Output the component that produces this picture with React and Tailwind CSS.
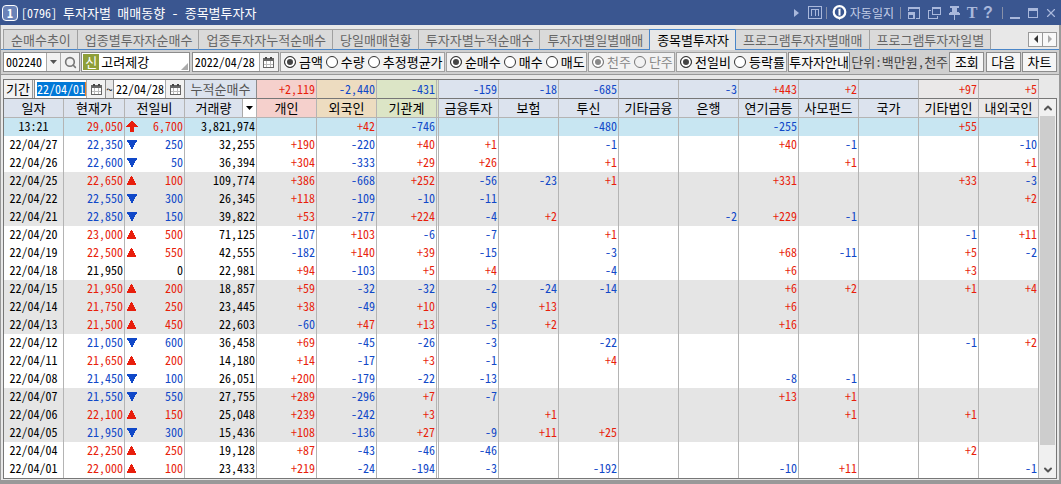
import React, { useState } from 'react';
import { ChevronDown, ChevronUp, Search, X } from 'lucide-react';

const TABS = [
    '순매수추이',
    '업종별투자자순매수',
    '업종투자자누적순매수',
    '당일매매현황',
    '투자자별누적순매수',
    '투자자별일별매매',
    '종목별투자자',
    '프로그램투자자별매매',
    '프로그램투자자일별',
];

const INVESTORS = [
    { name: '개인', total: '+2,119', bg: 'bg-[#f5d0cc]' },
    { name: '외국인', total: '-2,440', bg: 'bg-[#eddcc0]' },
    { name: '기관계', total: '-431', bg: 'bg-[#dce5c6]' },
    { name: '금융투자', total: '-159', bg: 'bg-[#dce3ee]' },
    { name: '보험', total: '-18', bg: 'bg-[#dce3ee]' },
    { name: '투신', total: '-685', bg: 'bg-[#dce3ee]' },
    { name: '기타금융', total: '', bg: 'bg-[#dce3ee]' },
    { name: '은행', total: '-3', bg: 'bg-[#dce3ee]' },
    { name: '연기금등', total: '+443', bg: 'bg-[#dce3ee]' },
    { name: '사모펀드', total: '+2', bg: 'bg-[#dce3ee]' },
    { name: '국가', total: '', bg: 'bg-[#dce3ee]' },
    { name: '기타법인', total: '+97', bg: 'bg-[#eae8e8]' },
    { name: '내외국인', total: '+5', bg: 'bg-[#eae8e8]' },
];

// [date, price, direction, change, volume, net buying per investor]
const ROWS = [
    ['13:21', '29,050', 'limit', '6,700', '3,821,974', ['', '+42', '-746', '', '', '-480', '', '', '-255', '', '', '+55', '']],
    ['22/04/27', '22,350', 'down', '250', '32,255', ['+190', '-220', '+40', '+1', '', '-1', '', '', '+40', '-1', '', '', '-10']],
    ['22/04/26', '22,600', 'down', '50', '36,394', ['+304', '-333', '+29', '+26', '', '+1', '', '', '', '+1', '', '', '+1']],
    ['22/04/25', '22,650', 'up', '100', '109,774', ['+386', '-668', '+252', '-56', '-23', '+1', '', '', '+331', '', '', '+33', '-3']],
    ['22/04/22', '22,550', 'down', '300', '26,345', ['+118', '-109', '-10', '-11', '', '', '', '', '', '', '', '', '+2']],
    ['22/04/21', '22,850', 'down', '150', '39,822', ['+53', '-277', '+224', '-4', '+2', '', '', '-2', '+229', '-1', '', '', '']],
    ['22/04/20', '23,000', 'up', '500', '71,125', ['-107', '+103', '-6', '-7', '', '+1', '', '', '', '', '', '-1', '+11']],
    ['22/04/19', '22,500', 'up', '550', '42,555', ['-182', '+140', '+39', '-15', '', '-3', '', '', '+68', '-11', '', '+5', '-2']],
    ['22/04/18', '21,950', '', '0', '22,981', ['+94', '-103', '+5', '+4', '', '-4', '', '', '+6', '', '', '+3', '']],
    ['22/04/15', '21,950', 'up', '200', '18,857', ['+59', '-32', '-32', '-2', '-24', '-14', '', '', '+6', '+2', '', '+1', '+4']],
    ['22/04/14', '21,750', 'up', '250', '23,445', ['+38', '-49', '+10', '-9', '+13', '', '', '', '+6', '', '', '', '']],
    ['22/04/13', '21,500', 'up', '450', '22,603', ['-60', '+47', '+13', '-5', '+2', '', '', '', '+16', '', '', '', '']],
    ['22/04/12', '21,050', 'down', '600', '36,458', ['+69', '-45', '-26', '-3', '', '-22', '', '', '', '', '', '-1', '+2']],
    ['22/04/11', '21,650', 'up', '200', '14,180', ['+14', '-17', '+3', '-1', '', '+4', '', '', '', '', '', '', '']],
    ['22/04/08', '21,450', 'down', '100', '26,051', ['+200', '-179', '-22', '-13', '', '', '', '', '-8', '-1', '', '', '']],
    ['22/04/07', '21,550', 'down', '550', '27,755', ['+289', '-296', '+7', '-7', '', '', '', '', '+13', '+1', '', '', '']],
    ['22/04/06', '22,100', 'up', '150', '25,048', ['+239', '-242', '+3', '', '+1', '', '', '', '', '+1', '', '+1', '']],
    ['22/04/05', '21,950', 'down', '300', '15,436', ['+108', '-136', '+27', '-9', '+11', '+25', '', '', '', '', '', '', '']],
    ['22/04/04', '22,250', 'up', '250', '19,128', ['+87', '-43', '-46', '-46', '', '', '', '', '', '', '', '+2', '']],
    ['22/04/01', '22,000', 'up', '100', '23,433', ['+219', '-24', '-194', '-3', '', '-192', '', '', '-10', '+11', '', '', '-1']],
];

const RED = 'text-[#e81e0c]';
const BLUE = 'text-[#1048c8]';

const signColor = (value) => (value.startsWith('-') ? BLUE : RED);

const directionColor = (direction) => {
    if (direction === 'down') return BLUE;
    if (direction === '') return 'text-black';
    return RED;
};

const rowBg = (index) => {
    if (index === 0) return 'bg-[#c8e6f2]';
    return Math.floor(index / 3) % 2 ? 'bg-[#e5e5e5]' : 'bg-white';
};

// 기관계 is separated from the institution breakdown by a double rule
const ruleRight = (index) => (index === 2 ? 'border-r-3 border-double' : 'border-r');

const DirectionMark = ({ direction }) => {
    if (direction === '') return <span />;
    return (
        <svg className="size-3" viewBox="0 0 12 12" fill="currentColor" shapeRendering="crispEdges">
            {direction === 'limit' && <path d="M5 1H7V2H8V3H9V4H10V5H11V6H12V7H8V12H4V7H0V6H1V5H2V4H3V3H4V2H5Z" />}
            {direction === 'up' && <path d="M5 2H6V3H7V5H8V7H9V9H10V11H1V9H2V7H3V5H4V3H5Z" />}
            {direction === 'down' && <path d="M1 2H11V4H10V5H9V7H8V9H7V11H5V9H4V7H3V5H2V4H1Z" />}
        </svg>
    );
};

const CalendarButton = ({ label }) => (
    <button type="button" aria-label={label} className="w-[19px] shrink-0 self-stretch flex items-center justify-center bg-[#f2f2f2] border-l border-[#aaa]">
        <svg width="11" height="11" viewBox="0 0 11 11" fill="none" shapeRendering="crispEdges">
            <path d="M0.5 1.5H10.5V10.5H0.5Z" fill="#fff" stroke="#666" />
            <path d="M0 1H11V4H0Z" fill="#666" />
            <path d="M2 0H4V2H2ZM7 0H9V2H7Z" fill="#444" />
            <path d="M3.5 4V10M7.5 4V10M1 7.5H10" stroke="#bbb" />
        </svg>
    </button>
);

const RadioGroup = ({ name, label, options, disabled }) => {
    const [value, setValue] = useState(options[0]);

    return (
        <fieldset
            disabled={disabled}
            aria-label={label}
            className="flex items-center gap-[3px] h-5 pl-[3px] pr-px bg-[#f2f2f2] border border-[#a0a0a0] shrink-0"
        >
            {options.map((option) => (
                <label key={option} className={`flex items-center gap-[3px] whitespace-nowrap ${disabled ? 'text-[#888]' : ''}`}>
                    <input
                        type="radio"
                        name={name}
                        checked={value === option}
                        onChange={() => setValue(option)}
                        className="appearance-none size-3 rounded-full border border-[#333] bg-white checked:bg-[#444] checked:shadow-[inset_0_0_0_2px_white] disabled:border-[#777] disabled:bg-[#f2f2f2] disabled:checked:bg-[#888]"
                    />
                    {option}
                </label>
            ))}
        </fieldset>
    );
};

const ToolButton = ({ children, className = '' }) => (
    <button type="button" className={`h-5 bg-[#f5f5f5] border border-[#8c8c8c] whitespace-nowrap shrink-0 ${className}`}>
        {children}
    </button>
);

const TitleButton = ({ label, className = 'w-5', children }) => (
    <button type="button" aria-label={label} className={`h-5 flex items-center justify-center ${className}`}>
        {children}
    </button>
);

const Divider = () => <span className="w-px h-3 bg-[#8790a8]" />;

const TitleBar = () => (
    <header className="flex items-center h-[25px] pl-[2px] pr-px bg-[#3a5690] text-white">
        <span className="size-4 flex items-center justify-center rounded-sm border border-white bg-[#6a83b8] text-[12px] font-bold">1</span>
        <h1 className="ml-[3px] whitespace-pre">
            <span className="text-[12px]">[0796] </span>
            투자자별 매매동향 - 종목별투자자
        </h1>
        <div className="ml-auto flex items-center text-[#a9b8dc]">
            <button type="button" aria-label="펼치기" className="mr-[9px]">
                <svg width="5" height="8" viewBox="0 0 5 8" fill="currentColor">
                    <path d="M0 0L5 4L0 8Z" />
                </svg>
            </button>
            <button type="button" aria-label="메모" className="mr-1">
                <svg width="14" height="13" viewBox="0 0 14 13" fill="none" stroke="currentColor" shapeRendering="crispEdges">
                    <path d="M0.5 0.5H13.5V12.5H0.5ZM3.5 10V3.5H10.5V10M7.5 4V10" />
                </svg>
            </button>
            <Divider />
            <button type="button" className="flex items-center gap-[3px] ml-[5px] mr-[6px] text-[12px] text-[#c3cde6]">
                <svg width="15" height="15" viewBox="0 0 15 15" fill="none">
                    <circle cx="7.5" cy="7" r="5.8" stroke="#fff" strokeWidth="2.2" />
                    <path d="M5.5 12.5L7.5 15L9.5 12.5Z" fill="#fff" />
                    <path d="M6 4.5L8.5 3.5V10.5H6.5V5.2Z" fill="#fff" />
                </svg>
                자동일지
            </button>
            <Divider />
            <div className="flex items-center ml-[3px] mr-[6px]">
                <TitleButton label="화면 크기">
                    <svg width="12" height="12" viewBox="0 0 12 12" fill="none" stroke="currentColor" shapeRendering="crispEdges">
                        <path d="M0.5 4V0.5H11.5V11.5H8M0 1.5H12" />
                        <path d="M0 5H7V12H0Z" fill="currentColor" stroke="none" />
                        <path d="M1 8H5V11H1Z" fill="#3a5690" stroke="none" />
                    </svg>
                </TitleButton>
                <TitleButton label="화면 복사">
                    <svg width="13" height="12" viewBox="0 0 13 12" fill="none" stroke="currentColor" shapeRendering="crispEdges">
                        <path d="M4.5 0.5H12.5V7.5H4.5ZM3 3.5H0.5V11.5H9.5V9" />
                        <path d="M4 1.5H13" />
                    </svg>
                </TitleButton>
                <TitleButton label="고정">
                    <svg width="11" height="14" viewBox="0 0 11 14" fill="currentColor" shapeRendering="crispEdges">
                        <path d="M1 0H10V2H8V6H10V7H11V9H6V14H5V9H0V7H1V6H3V2H1Z" />
                    </svg>
                </TitleButton>
                <TitleButton label="글꼴" className="w-4">
                    <span className="font-['Liberation_Serif',serif] text-[16px] font-bold">T</span>
                </TitleButton>
                <TitleButton label="도움말" className="w-4">
                    <span className="font-['Liberation_Sans',sans-serif] text-[16px] font-bold">?</span>
                </TitleButton>
            </div>
            <Divider />
            <div className="flex items-center ml-[3px]">
                <TitleButton label="최소화" className="w-[18px]">
                    <svg width="10" height="10" viewBox="0 0 10 10" fill="currentColor" className="mt-1">
                        <path d="M0 7H10V9H0Z" />
                    </svg>
                </TitleButton>
                <TitleButton label="최대화" className="w-[18px]">
                    <svg width="10" height="10" viewBox="0 0 10 10" fill="none" stroke="currentColor" shapeRendering="crispEdges">
                        <path d="M0.5 0.5H9.5V9.5H0.5Z" />
                        <path d="M0 1.5H10M0 2.5H10" />
                    </svg>
                </TitleButton>
                <TitleButton label="닫기" className="w-[18px]">
                    <X size={14} strokeWidth={2} />
                </TitleButton>
            </div>
        </div>
    </header>
);

const TabBar = ({ active, onSelect }) => {
    const activeIndex = TABS.indexOf(active);

    return (
        <nav className="flex pt-1 whitespace-nowrap">
            <span className="w-[2px] border-b border-[#4a86c8]" />
            {TABS.map((name, index) => (
                <button
                    key={name}
                    type="button"
                    onClick={() => onSelect(name)}
                    className={`h-[21px] pl-[7px] pr-[6px] border-t border-l ${
                        index === activeIndex
                            ? 'bg-[#e8e8e8] text-black border-[#4a86c8]'
                            : 'bg-[#dadada] text-[#666] border-b border-t-[#a0a0a0] border-b-[#4a86c8]'
                    } ${index === activeIndex + 1 ? 'border-l-[#4a86c8]' : index !== activeIndex ? 'border-l-[#a0a0a0]' : ''} ${
                        index === TABS.length - 1 ? 'border-r border-r-[#a0a0a0]' : ''
                    }`}
                >
                    {name}
                </button>
            ))}
            <div className="flex-1 flex justify-end items-center pr-[2px] border-b border-[#4a86c8]">
                <div className="flex border border-[#999] bg-[#f8f8f8] h-[15px]">
                    <button type="button" aria-label="이전 탭" className="w-[14px] flex items-center justify-center border-r border-[#999]">
                        <svg width="4" height="8" viewBox="0 0 4 8" fill="#333"><path d="M4 0V8L0 4Z" /></svg>
                    </button>
                    <button type="button" aria-label="다음 탭" className="w-[13px] flex items-center justify-center">
                        <svg width="4" height="8" viewBox="0 0 4 8" fill="#aaa"><path d="M0 0V8L4 4Z" /></svg>
                    </button>
                </div>
            </div>
        </nav>
    );
};

const Toolbar = () => (
    <div className="flex items-center justify-between px-[2px] py-[2px] bg-[#d0d0d0] border-b border-[#999]">
        <div className="flex h-5 bg-white border border-[#8c8c8c] shrink-0 text-[12px]">
            <input aria-label="종목코드" defaultValue="002240" className="w-[42px] pl-[2px] outline-none" />
            <button type="button" aria-label="종목 목록" className="w-[14px] flex items-center justify-center bg-[#f2f2f2] border-l border-[#aaa]">
                <svg width="7" height="4" viewBox="0 0 7 4" fill="#555"><path d="M0 0H7L3.5 4Z" /></svg>
            </button>
            <button type="button" aria-label="종목 검색" className="w-[19px] flex items-center justify-center bg-[#f2f2f2] border-l border-[#aaa] text-[#777]">
                <Search size={13} strokeWidth={3} />
            </button>
        </div>
        <div className="relative flex items-center h-5 w-[109px] pl-px bg-white border border-[#8c8c8c] shrink-0">
            <span className="size-4 flex items-center justify-center bg-[#8f9f38] text-white">신</span>
            <span className="ml-[2px]">고려제강</span>
            <svg className="absolute right-px bottom-px" width="7" height="7" viewBox="0 0 7 7" fill="#aaa">
                <path d="M7 0V7H0Z" />
            </svg>
        </div>
        <div className="flex h-5 bg-white border border-[#8c8c8c] shrink-0 text-[12px]">
            <input aria-label="기준일" defaultValue="2022/04/28" className="w-[66px] pl-[2px] outline-none" />
            <CalendarButton label="기준일 달력" />
        </div>
        <RadioGroup name="measure" label="표시 기준" options={['금액', '수량', '추정평균가']} />
        <RadioGroup name="side" label="매매 구분" options={['순매수', '매수', '매도']} />
        <RadioGroup name="unit" label="수량 단위" options={['천주', '단주']} disabled />
        <RadioGroup name="change" label="등락 표시" options={['전일비', '등락률']} />
        <ToolButton>투자자안내</ToolButton>
        <span className="text-[#444] whitespace-nowrap">단위:백만원,천주</span>
        <ToolButton className="w-[35px]">조회</ToolButton>
        <ToolButton className="w-[35px]">다음</ToolButton>
        <ToolButton className="w-[35px]">차트</ToolButton>
    </div>
);

const PeriodPicker = () => (
    <div className="flex items-center h-[18px] bg-[#e8e8e8] text-[12px]">
        <button type="button" className="h-[18px] w-[29px] shrink-0 whitespace-nowrap bg-[#f2f2f2] border-r border-[#999] text-[13px] leading-4">기간</button>
        <div className="flex items-center shrink-0 h-[18px] ml-px bg-white border-l border-[#8c8c8c]">
            <input aria-label="시작일" defaultValue="22/04/01" className="w-[49px] h-[14px] ml-[2px] bg-[#0078d7] text-white border-r border-[#f08020] outline-none" />
            <CalendarButton label="시작일 달력" />
        </div>
        <span className="w-2 shrink-0 text-center border-l border-[#8c8c8c]">~</span>
        <div className="flex items-center flex-1 min-w-0 h-[18px] bg-white border-l border-[#8c8c8c]">
            <input aria-label="종료일" defaultValue="22/04/28" className="flex-1 min-w-0 pl-[2px] outline-none" />
            <CalendarButton label="종료일 달력" />
        </div>
    </div>
);

const InvestorTable = () => (
    <table className="w-full table-fixed border-separate border-spacing-0 text-[12px]">
        <colgroup>
            <col className="w-[60px]" />
            <col className="w-[61px]" />
            <col className="w-[60px]" />
            <col className="w-[72px]" />
            {INVESTORS.map(({ name }, index) => (
                <col key={name} className={index === 2 ? 'w-[62px]' : 'w-[60px]'} />
            ))}
        </colgroup>
        <thead className="text-[13px]">
            <tr className="h-[19px]">
                <td colSpan={3} className="p-0 border-b border-r border-b-[#777] border-r-[#8c8c8c]">
                    <PeriodPicker />
                </td>
                <th className="p-0 font-normal leading-4 whitespace-nowrap text-[#555] bg-[#dce3ee] border-b border-r border-b-[#777] border-r-[#8c8c8c]">누적순매수</th>
                {INVESTORS.map(({ name, total, bg }, index) => (
                    <td key={name} className={`p-0 text-right text-[12px] leading-4 border-b border-b-[#777] border-r-[#b4b4b4] ${ruleRight(index)} ${bg} ${signColor(total)}`}>
                        <span className="mr-px">{total}</span>
                    </td>
                ))}
            </tr>
            <tr className="h-[19px] *:border-b *:border-b-[#b4b4b4] *:border-r-[#b4b4b4] *:p-0 *:font-normal *:leading-4 *:whitespace-nowrap">
                <th className="bg-[#dce3ee] border-r">일자</th>
                <th className="bg-[#dce3ee] border-r">현재가</th>
                <th className="bg-[#dce3ee] border-r">전일비</th>
                <th className="bg-[#dce3ee] border-r">
                    <div className="flex items-stretch h-[18px]">
                        <span className="flex-1 leading-[18px]">거래량</span>
                        <button type="button" aria-label="거래량 선택" className="w-[14px] flex items-center justify-center bg-white border-l border-[#aaa]">
                            <svg width="7" height="4" viewBox="0 0 7 4"><path d="M0 0H7L3.5 4Z" /></svg>
                        </button>
                    </div>
                </th>
                {INVESTORS.map(({ name, bg }, index) => (
                    <th key={name} className={`${ruleRight(index)} ${bg}`}>{name}</th>
                ))}
            </tr>
        </thead>
        <tbody>
            {ROWS.map(([date, price, direction, change, volume, values], rowIndex) => (
                <tr key={date} className={`h-[18px] *:p-0 *:leading-4 *:align-top *:border-r-[#b4b4b4] ${rowBg(rowIndex)}`}>
                    <td className="border-r text-center">{date}</td>
                    <td className={`border-r text-right ${directionColor(direction)}`}>
                        <span className="mr-px">{price}</span>
                    </td>
                    <td className={`border-r ${directionColor(direction)}`}>
                        <div className="flex items-center justify-between px-px">
                            <DirectionMark direction={direction} />
                            {change}
                        </div>
                    </td>
                    <td className="border-r text-right">
                        <span className="mr-px">{volume}</span>
                    </td>
                    {values.map((value, index) => (
                        <td key={INVESTORS[index].name} className={`text-right ${ruleRight(index)} ${signColor(value)}`}>
                            <span className="mr-px">{value}</span>
                        </td>
                    ))}
                </tr>
            ))}
        </tbody>
    </table>
);

const ScrollBar = () => (
    <div className="w-[18px] shrink-0 mt-[19px] px-px flex flex-col bg-[#f0f0f0] border-t border-r border-[#777]">
        <button type="button" aria-label="위로" className="h-[17px] flex items-center justify-center text-[#555]">
            <ChevronUp size={12} strokeWidth={4} />
        </button>
        <div className="flex-1 flex flex-col">
            <div className="flex-[20] bg-[#cdcdcd]" />
            <div className="flex-1" />
        </div>
        <button type="button" aria-label="아래로" className="h-[17px] flex items-center justify-center text-[#555]">
            <ChevronDown size={12} strokeWidth={4} />
        </button>
    </div>
);

const App = () => {
    const [tab, setTab] = useState('종목별투자자');

    return (
        <div className="text-[13px] leading-[18px] font-['Noto_Sans_Mono_CJK_KR','Noto_Sans_CJK_KR',sans-serif] text-black bg-[#e8e8e8]">
            <TitleBar />
            <main className="border-l border-r-2 border-b-4 border-[#999]">
                <TabBar active={tab} onSelect={setTab} />
                <Toolbar />
                <div className="flex pt-1 px-[2px] pb-px">
                    <div className="flex-1 flex border-b border-[#777]">
                        <div className="flex-1 border-t border-l border-[#777]">
                            <InvestorTable />
                        </div>
                        <ScrollBar />
                    </div>
                </div>
            </main>
        </div>
    );
};

export default App;
